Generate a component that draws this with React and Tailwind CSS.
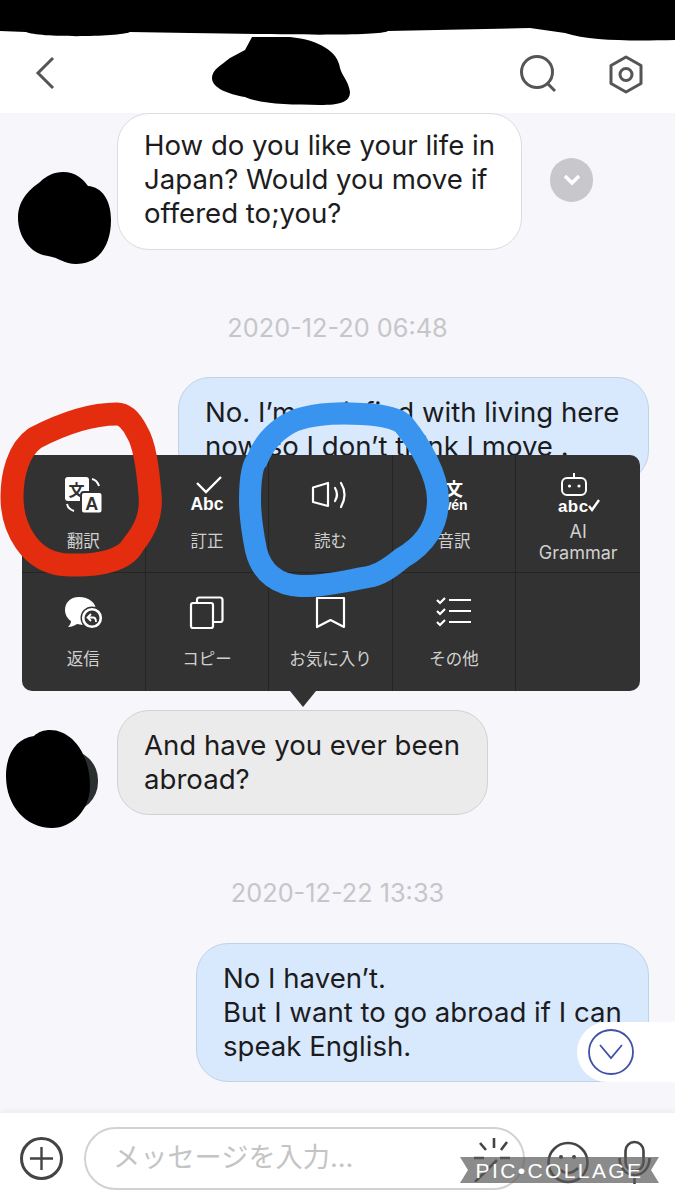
import React from "react";

const ico = "font-['Liberation_Sans',sans-serif] font-bold";

const TranslateIcon = () => (
    <svg width="40" height="40" viewBox="0 0 40 40">
        <rect x="2" y="2" width="24" height="24" rx="3" fill="#fff" />
        <text x="13.5" y="20.5" textAnchor="middle" fontSize="16" fontWeight="700" fill="#323232" className="font-['Noto_Sans_CJK_JP',sans-serif]">文</text>
        <rect x="18" y="17" width="21.5" height="21.5" rx="3" fill="#fff" stroke="#323232" strokeWidth="2" />
        <text x="28.8" y="34.5" textAnchor="middle" fontSize="18" fontWeight="700" fill="#323232" className={ico}>A</text>
        <path d="M29 4 Q34 5 36 11" stroke="#fff" strokeWidth="2" fill="none" />
        <path d="M4 29 Q5 34 11 36" stroke="#fff" strokeWidth="2" fill="none" />
    </svg>
);

const AbcIcon = () => (
    <svg width="40" height="40" viewBox="0 0 40 40">
        <path d="M10 8 L19 17 L34 2" stroke="#fff" strokeWidth="2.4" fill="none" />
        <text x="20" y="35" textAnchor="middle" fontSize="17.5" fill="#fff" className={ico}>Abc</text>
    </svg>
);

const SpeakerIcon = () => (
    <svg width="40" height="40" viewBox="0 0 40 40" fill="none" stroke="#fff" strokeWidth="2.2">
        <path d="M3 12.5 L18 8 V31 L3 27 Z" strokeLinejoin="round" />
        <path d="M25 13 Q29 19.5 25 26" strokeLinecap="round" />
        <path d="M31 8 Q38 19.5 31 32" strokeLinecap="round" />
    </svg>
);

const PinyinIcon = () => (
    <svg width="40" height="40" viewBox="0 0 40 40">
        <text x="20" y="21" textAnchor="middle" fontSize="18" fontWeight="700" fill="#fff" className="font-['Noto_Sans_CJK_JP',sans-serif]">文</text>
        <text x="20" y="35" textAnchor="middle" fontSize="14" fill="#fff" className={ico}>wén</text>
    </svg>
);

const RobotIcon = () => (
    <svg width="44" height="44" viewBox="0 0 44 44">
        <path d="M18 0 V5" stroke="#fff" strokeWidth="2" />
        <rect x="6" y="5" width="24" height="17" rx="5" fill="none" stroke="#fff" strokeWidth="2" />
        <circle cx="13.5" cy="13" r="1.6" fill="#fff" />
        <circle cx="23" cy="13" r="1.6" fill="#fff" />
        <text x="2" y="39" fontSize="17" letterSpacing="0.4" fill="#fff" className={ico}>abc</text>
        <path d="M33 33 L36 37 L43 27" stroke="#fff" strokeWidth="2.4" fill="none" />
    </svg>
);

const ReplyIcon = () => (
    <svg width="40" height="40" viewBox="0 0 40 40">
        <path d="M16 4 C7 4 2 10 2 17 C2 22 5 26 8 28 C8 30 7 32 5 34 C9 34 12 32 14 31 C16 31 18 32 20 32 C29 32 33 25 33 17 C33 10 26 4 16 4 Z" fill="#fff" />
        <circle cx="29" cy="25" r="11.5" fill="#323232" />
        <circle cx="29" cy="25" r="8.8" fill="none" stroke="#fff" strokeWidth="2.6" />
        <path d="M28 21 L24.5 24.5 L28 28 M25 24.5 H30 Q33 24.5 33 29" stroke="#fff" strokeWidth="1.8" fill="none" />
    </svg>
);

const CopyIcon = () => (
    <svg width="40" height="40" viewBox="0 0 40 40" fill="none" stroke="#fff" strokeWidth="2.2">
        <rect x="4" y="10" width="22" height="25" rx="2" />
        <path d="M10 10 V7 Q10 4.5 12.5 4.5 H33 Q35.5 4.5 35.5 7 V27 Q35.5 29 33 29 H26" />
    </svg>
);

const BookmarkIcon = () => (
    <svg width="40" height="40" viewBox="0 0 40 40" fill="none" stroke="#fff" strokeWidth="2.2">
        <path d="M7 5 H34 V34 L20.5 27 L7 34 Z" strokeLinejoin="round" />
    </svg>
);

const ChecklistIcon = () => (
    <svg width="40" height="40" viewBox="0 0 40 40" fill="none" stroke="#fff" strokeWidth="2.2">
        <path d="M3 7 L6 10 L11 5 M3 18 L6 21 L11 16 M3 29 L6 32 L11 27" />
        <path d="M15 7 H37 M15 18 H37 M15 29 H37" />
    </svg>
);

const items = [
    { label: "翻訳", icon: <TranslateIcon /> },
    { label: "訂正", icon: <AbcIcon /> },
    { label: "読む", icon: <SpeakerIcon /> },
    { label: "音訳", icon: <PinyinIcon /> },
    { label: "AI Grammar", icon: <RobotIcon />, small: true },
    { label: "返信", icon: <ReplyIcon /> },
    { label: "コピー", icon: <CopyIcon /> },
    { label: "お気に入り", icon: <BookmarkIcon /> },
    { label: "その他", icon: <ChecklistIcon /> },
    { label: "", icon: null },
];

const Blob = ({ className, d, w, h }) => (
    <svg className={className} width={w} height={h} viewBox={`0 0 ${w} ${h}`}>
        <path d={d} fill="#000" />
    </svg>
);

const Stamp = ({ children }) => (
    <div className="text-center text-[25.3px] leading-[34px] text-[#c6c6ca]">{children}</div>
);

const MessageMenu = () => (
    <div className="absolute left-[22px] top-[455px] w-[618px] h-[236px] rounded-[10px] bg-[#323232]">
        <div className="grid grid-cols-5 grid-rows-2 h-full">
            {items.map((it, i) => (
                <div
                    key={i}
                    className={`flex flex-col items-center pt-[20px] border-[#242424] ${i % 5 !== 4 ? "border-r" : ""} ${i < 5 ? "border-b" : ""}`}
                >
                    <div className="h-[40px] flex items-center justify-center">{it.icon}</div>
                    {it.label && (
                        <div
                            className={`text-center text-[#d0d0d0] ${it.small ? "mt-[6px] text-[18px] leading-[21px] w-[90px]" : "mt-[15px] text-[16.5px] leading-[22px]"}`}
                        >
                            {it.label}
                        </div>
                    )}
                </div>
            ))}
        </div>
        <div className="absolute left-[268px] top-[236px] w-0 h-0 border-l-[13px] border-r-[13px] border-t-[16px] border-l-transparent border-r-transparent border-t-[#323232]" />
    </div>
);

const App = () => {
    return (
        <div className="relative w-[675px] h-[1200px] overflow-hidden flex flex-col bg-white text-[#1c1c1e] font-['Inter','Noto_Sans_CJK_JP',sans-serif]">
            {/* header */}
            <div className="h-[113px] shrink-0 bg-white flex items-start pt-[55px] pl-[32px]">
                <svg width="28" height="38" viewBox="0 0 28 38" fill="none" stroke="#555" strokeWidth="3">
                    <path d="M21 3 L6 18 L21 33" />
                </svg>
                <svg className="ml-[460px]" width="38" height="38" viewBox="0 0 38 38" fill="none" stroke="#555" strokeWidth="3">
                    <circle cx="17" cy="17" r="15.5" />
                    <path d="M27 28 L35 36" />
                </svg>
                <svg className="ml-[50px]" width="36" height="40" viewBox="0 0 36 40" fill="none" stroke="#555" strokeWidth="3">
                    <path d="M18 2 L33 10.5 V28.5 L18 37 L3 28.5 V10.5 Z" strokeLinejoin="round" />
                    <circle cx="18" cy="19.5" r="6" />
                </svg>
            </div>

            {/* chat */}
            <div className="flex-1 min-h-0 bg-[#f6f6fb] flex flex-col overflow-hidden">
                <div className="flex items-start pl-[18px]">
                    <Blob
                        className="mt-[59px] shrink-0"
                        w={93}
                        h={92}
                        d="M45 0 C58 0 66 8 70 14 C84 15 93 28 93 48 C93 72 82 92 58 92 C46 92 42 86 30 84 C12 82 0 64 0 46 C0 26 14 16 22 10 C28 4 36 0 45 0 Z"
                    />
                    <div className="ml-[6px] w-[405px] h-[137px] shrink-0 rounded-[32px] border border-[#dcdce0] bg-white pl-[26px] pt-[14px] text-[27.6px] leading-[34px]">
                        How do you like your life in<br />Japan? Would you move if<br />offered to;you?
                    </div>
                    <div className="ml-[28px] mt-[45px] w-[43px] h-[44px] rounded-full bg-[#c8c8cc] flex items-center justify-center">
                        <svg width="18" height="12" viewBox="0 0 18 12" fill="none" stroke="#fff" strokeWidth="3.5">
                            <path d="M2 2 L9 9 L16 2" />
                        </svg>
                    </div>
                </div>

                <div className="mt-[47px]"><Stamp>2020-12-20 06:48</Stamp></div>

                <div className="self-end mr-[26px] mt-[32px] w-[471px] h-[106px] shrink-0 rounded-[32px] border border-[#bfd2e6] bg-[#d9e9fd] pl-[26px] pt-[17px] text-[27.6px] leading-[34px]">
                    No. I’m satisfied with living here<br />now so I don’t think I move .
                </div>

                <div className="flex items-start pl-[6px] mt-[227px]">
                    <div className="relative mt-[20px] shrink-0 w-[92px] h-[98px]">
                        <div className="absolute right-0 top-[20px] w-[30px] h-[62px] rounded-r-[30px] bg-[#2a2f30]" />
                        <Blob
                            className="absolute left-0 top-0"
                            w={84}
                            h={98}
                            d="M44 0 C66 0 84 24 84 56 C84 80 66 98 46 98 C20 98 0 76 0 46 C0 22 12 8 28 6 C32 2 38 0 44 0 Z"
                        />
                    </div>
                    <div className="ml-[19px] w-[371px] h-[105px] shrink-0 rounded-[32px] border border-[#d2d2d4] bg-[#ebebeb] pl-[26px] pt-[17px] text-[27.6px] leading-[34px]">
                        And have you ever been<br />abroad?
                    </div>
                </div>

                <div className="mt-[48px]"><Stamp>2020-12-22 13:33</Stamp></div>

                <div className="self-end mr-[26px] mt-[33px] w-[453px] h-[139px] shrink-0 rounded-[32px] border border-[#bfd2e6] bg-[#d9e9fd] pl-[26px] pt-[17px] text-[27.6px] leading-[34px]">
                    No I haven’t.<br />But I want to go abroad if I can<br />speak English.
                </div>
            </div>

            {/* input bar */}
            <div className="relative h-[87px] shrink-0 bg-white shadow-[0_-2px_6px_rgba(0,0,0,0.05)] pt-[14px] pl-[20px] flex items-start">
                <div className="flex items-center h-[63px]">
                    <svg width="43" height="43" viewBox="0 0 43 43" fill="none" stroke="#444" strokeWidth="3">
                        <circle cx="21.5" cy="21.5" r="20" />
                        <path d="M21.5 10 V33 M10 21.5 H33" strokeWidth="2.4" />
                    </svg>
                    <div className="ml-[21px] w-[441px] h-[63px] rounded-[32px] border-2 border-[#d2d2d2] flex items-center justify-between pl-[27px] pr-[11px]">
                        <span className="text-[27.2px] text-[#c4c4c4]">メッセージを入力...</span>
                        <svg width="40" height="46" viewBox="0 0 40 46" fill="none" stroke="#444" strokeWidth="2.6">
                            <path d="M3 46 L25 24" />
                            <path d="M22 2 V12 M8 7 L14 14 M35 6 L29 14 M2 22 H12 M28 22 H38" />
                        </svg>
                    </div>
                    <svg className="ml-[22px]" width="42" height="50" viewBox="0 0 42 50" fill="none" stroke="#444" strokeWidth="2.6">
                        <circle cx="21" cy="28.5" r="19.5" />
                        <circle cx="14" cy="23" r="2" fill="#444" stroke="none" />
                        <circle cx="27" cy="23" r="2" fill="#444" stroke="none" />
                        <path d="M11 34 Q21 44 31 34" />
                    </svg>
                    <svg className="ml-[29px]" width="33" height="50" viewBox="0 0 33 50" fill="none" stroke="#444" strokeWidth="2.6">
                        <rect x="7.5" y="8" width="18" height="29" rx="9" />
                        <path d="M1.5 24 C1.5 34 8 41 16.5 41 C25 41 31.5 34 31.5 24 M16.5 41 V50" />
                    </svg>
                </div>
            </div>

            <MessageMenu />

            {/* scroll down button */}
            <div className="absolute left-[577px] top-[1022px] w-[98px] h-[60px] rounded-l-[30px] bg-white pl-[11px] flex items-center">
                <svg width="46" height="46" viewBox="0 0 46 46" fill="none" stroke="#3f52a8" strokeWidth="1.8">
                    <circle cx="23" cy="23" r="22" />
                    <path d="M12 16 L23 29 L34 16" />
                </svg>
            </div>

            {/* redactions and scribbles */}
            <svg className="absolute left-0 top-0 pointer-events-none" width="675" height="1200" viewBox="0 0 675 1200">
                <path d="M0 0 H675 V40 C630 41 590 41 565 33 L530 28 L388 31 C380 36 300 35 190 33 L130 32 C120 37 40 38 26 32 L0 31 Z" fill="#000" />
                <path d="M252 37 H290 C320 40 338 52 340 68 C342 76 348 80 350 92 C350 102 340 105 320 105 C290 105 260 104 245 97 C228 94 212 88 212 78 C212 70 220 66 230 58 L245 50 Z" fill="#000" />
                <path d="M117 414 C90 414 60 425 35 438 C18 450 12 475 12 497 C12 525 28 565 70 565 C100 566 125 560 133 545 C145 530 152 515 150 495 C148 470 145 445 137 432 C132 422 125 414 117 414 Z" fill="none" stroke="#e42c0f" strokeWidth="23" />
                <path d="M250 500 C250 480 252 465 257 460 C265 440 280 427 296 420 C320 412 345 413 362 414 C385 415 400 420 404 425 C420 445 438 475 438 500 C438 525 425 545 402 558 C390 568 380 575 368 577 C350 580 325 587 300 586 C280 585 262 575 256 550 C252 530 250 515 250 500 Z" fill="none" stroke="#3894ee" strokeWidth="22" />
            </svg>

            {/* collage watermark */}
            <div className="absolute left-[460px] top-[1157px] w-[199px] h-[26px] bg-[#5a5a5a]/70 [clip-path:polygon(0_0,100%_0,96%_50%,100%_100%,0_100%,4%_50%)] flex items-center justify-center text-white text-[21px] tracking-[2.4px] leading-none font-['Liberation_Sans',sans-serif]">
                PIC•COLLAGE
            </div>
        </div>
    );
};

export default App;
